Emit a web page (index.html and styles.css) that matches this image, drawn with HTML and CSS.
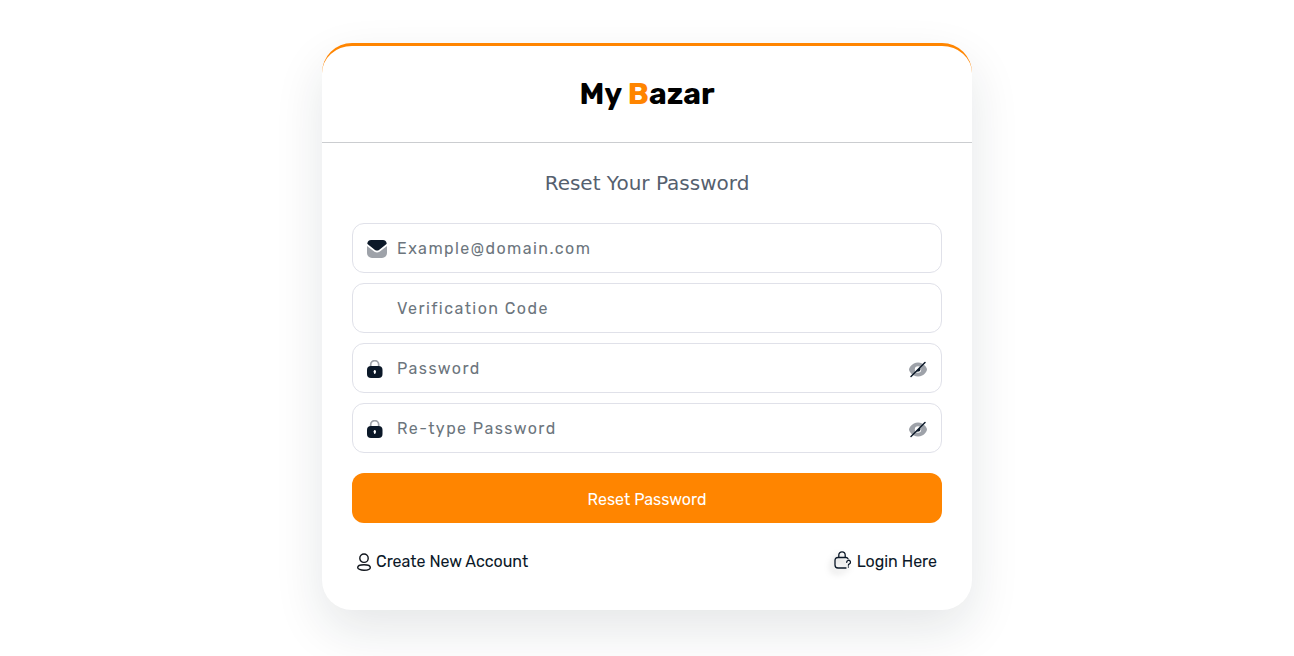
FILE: index.html
```html
<!DOCTYPE html>
<html lang="en">
<head>
<meta charset="utf-8">
<meta name="viewport" content="width=device-width, initial-scale=1">
<title>My Bazar - Reset Password</title>
<link rel="stylesheet" href="styles.css">
</head>
<body>
<svg class="sprite" aria-hidden="true">
  <symbol id="icon-lock" viewBox="0 0 16 18">
    <path d="M3.700 7V4.600a4 4 0 0 1 8 0V7" fill="none" stroke="#9ea2a9" stroke-width="1.700"/>
    <rect x="0" y="6" width="15.500" height="12" rx="4" fill="#0b1828"/>
    <rect x="7" y="10" width="1.500" height="4" rx=".75" fill="#fff"/>
    <circle cx="7.750" cy="11.700" r="1.200" fill="#fff"/>
  </symbol>
  <symbol id="icon-eye-off" viewBox="0 0 18 18">
    <path d="M0 9.500q0-1.500 1.500-3.200Q4.500 2.500 9 2.500t7.500 3.800Q18 8 18 9.500t-1.500 3.200Q13.500 16.500 9 16.500t-7.500-3.800Q0 11 0 9.500z" fill="#9ea2a9"/>
    <circle cx="9" cy="9.500" r="3.200" fill="#fff"/>
    <path d="M6.800 11.700l4.400-4.400q1 3.400-1.400 4.200z" fill="#0b1828"/>
    <path d="M2 16.500L16 2.500" stroke="#0b1828" stroke-width="1.500" stroke-linecap="round"/>
  </symbol>
</svg>
<main class="card">
  <header class="card-header">
    <h1 class="brand">My <span class="brand-accent">B</span>azar</h1>
  </header>
  <form class="card-body">
    <h2 class="title">Reset Your Password</h2>
    <div class="fields">
      <div class="field">
        <span class="field-icon">
          <svg width="20" height="18" viewBox="0 0 20 18" aria-hidden="true">
            <path d="M0 6L7.500 11.800q2.500 1.500 5 0L20 6V13a5 5 0 0 1-5 5H5a5 5 0 0 1-5-5z" fill="#9ea2a9"/>
            <path d="M4 0h12q2.800 0 3.700 3.300.1.600-.5 1L12 9.900q-2 1.300-4 0L.800 4.300q-.6-.4-.5-1Q1.200 0 4 0z" fill="#0b1828"/>
          </svg>
        </span>
        <input class="input" type="email" placeholder="Example@domain.com" aria-label="Email">
      </div>
      <div class="field">
        <span class="field-icon"></span>
        <input class="input" type="text" placeholder="Verification Code" aria-label="Verification code">
      </div>
      <div class="field">
        <span class="field-icon"><svg width="16" height="18" aria-hidden="true"><use href="#icon-lock"/></svg></span>
        <input class="input" type="password" placeholder="Password" aria-label="Password">
        <button class="toggle" type="button" aria-label="Show password"><svg width="18" height="18"><use href="#icon-eye-off"/></svg></button>
      </div>
      <div class="field">
        <span class="field-icon"><svg width="16" height="18" aria-hidden="true"><use href="#icon-lock"/></svg></span>
        <input class="input" type="password" placeholder="Re-type Password" aria-label="Re-type password">
        <button class="toggle" type="button" aria-label="Show password"><svg width="18" height="18"><use href="#icon-eye-off"/></svg></button>
      </div>
    </div>
    <button class="submit" type="submit">Reset Password</button>
    <nav class="links">
      <a class="link" href="#">
        <svg width="14" height="18" viewBox="0 0 14 18" fill="none" stroke="#10151c" stroke-width="1.400" aria-hidden="true">
          <circle cx="7" cy="5.200" r="4.200"/><ellipse cx="7" cy="14.500" rx="6.300" ry="2.700"/>
        </svg>
        Create New Account
      </a>
      <a class="link" href="#">
        <svg class="login-icon" width="18" height="18" viewBox="0 0 18 18" fill="none" stroke="#0b1828" stroke-width="1.300" stroke-linecap="round" aria-hidden="true">
          <path d="M4.800 6.500V4a3.200 3.200 0 0 1 6.400 0v2.500M14 7.800Q13.500 6.500 12 6.500H4Q1 6.500 1 9.500V14q0 3 3 3h8"/>
          <path d="M12.700 11.300a1.900 1.900 0 1 1 2.700 1.600q-1 .4-1 1.300M14.400 16v.1"/>
        </svg>
        Login Here
      </a>
    </nav>
  </form>
</main>
</body>
</html>
```
FILE: styles.css
```css
* {
  box-sizing: border-box;
}

body {
  margin: 0;
  min-height: 100vh;
  padding: 43px 0;
  background: #fff;
  color: #0b1828;
  font: 16px/24px Rubik, Roboto, sans-serif;
}

.sprite {
  display: none;
}

.card {
  max-width: 650px;
  margin: 0 auto;
  border-top: 3px solid #ff8500;
  border-radius: 30px;
  background: #fff;
  box-shadow: 0 20px 50px rgba(20, 40, 45, 0.11);
}

.card-header {
  padding: 28px 30px;
  border-bottom: 1px solid #cbcdd0;
  text-align: center;
}

.brand {
  margin: 0;
  color: #000;
  font-size: 30px;
  font-weight: 700;
  line-height: 40px;
}

.brand-accent {
  color: #ff8500;
}

.card-body {
  padding: 28px 30px 36px;
}

.title {
  margin: 0 0 28px;
  color: #55606e;
  font: 400 20px/24px "DejaVu Sans", sans-serif;
  text-align: center;
}

.fields {
  display: grid;
  gap: 10px;
  margin-bottom: 20px;
}

.field {
  display: flex;
  align-items: center;
  height: 50px;
  padding: 0 14px;
  border: 1px solid #e0e1e9;
  border-radius: 12px;
}

.field-icon {
  display: flex;
  flex: none;
  width: 30px;
  padding-top: 2px;
}

.input {
  flex: 1;
  min-width: 0;
  height: 100%;
  padding: 0;
  border: 0;
  outline: 0;
  background: transparent;
  color: #0b1828;
  font: inherit;
  letter-spacing: 0.09em;
}

.input::placeholder {
  color: #6c757d;
  opacity: 1;
}

.toggle {
  display: flex;
  padding: 2px 0 0;
  border: 0;
  background: none;
  cursor: pointer;
}

.submit {
  display: block;
  width: 100%;
  height: 50px;
  padding: 3px 0 0;
  border: 0;
  border-radius: 12px;
  background: #ff8500;
  color: #fff;
  font: inherit;
  cursor: pointer;
}

.links {
  display: flex;
  flex-wrap: wrap;
  justify-content: space-between;
  padding: 27px 5px 0;
}

.link {
  display: flex;
  align-items: center;
  gap: 5px;
  color: inherit;
  text-decoration: none;
}

.login-icon {
  margin-bottom: 4px;
  filter: drop-shadow(-3px 4px 3px rgba(0, 0, 0, 0.25));
}
```
